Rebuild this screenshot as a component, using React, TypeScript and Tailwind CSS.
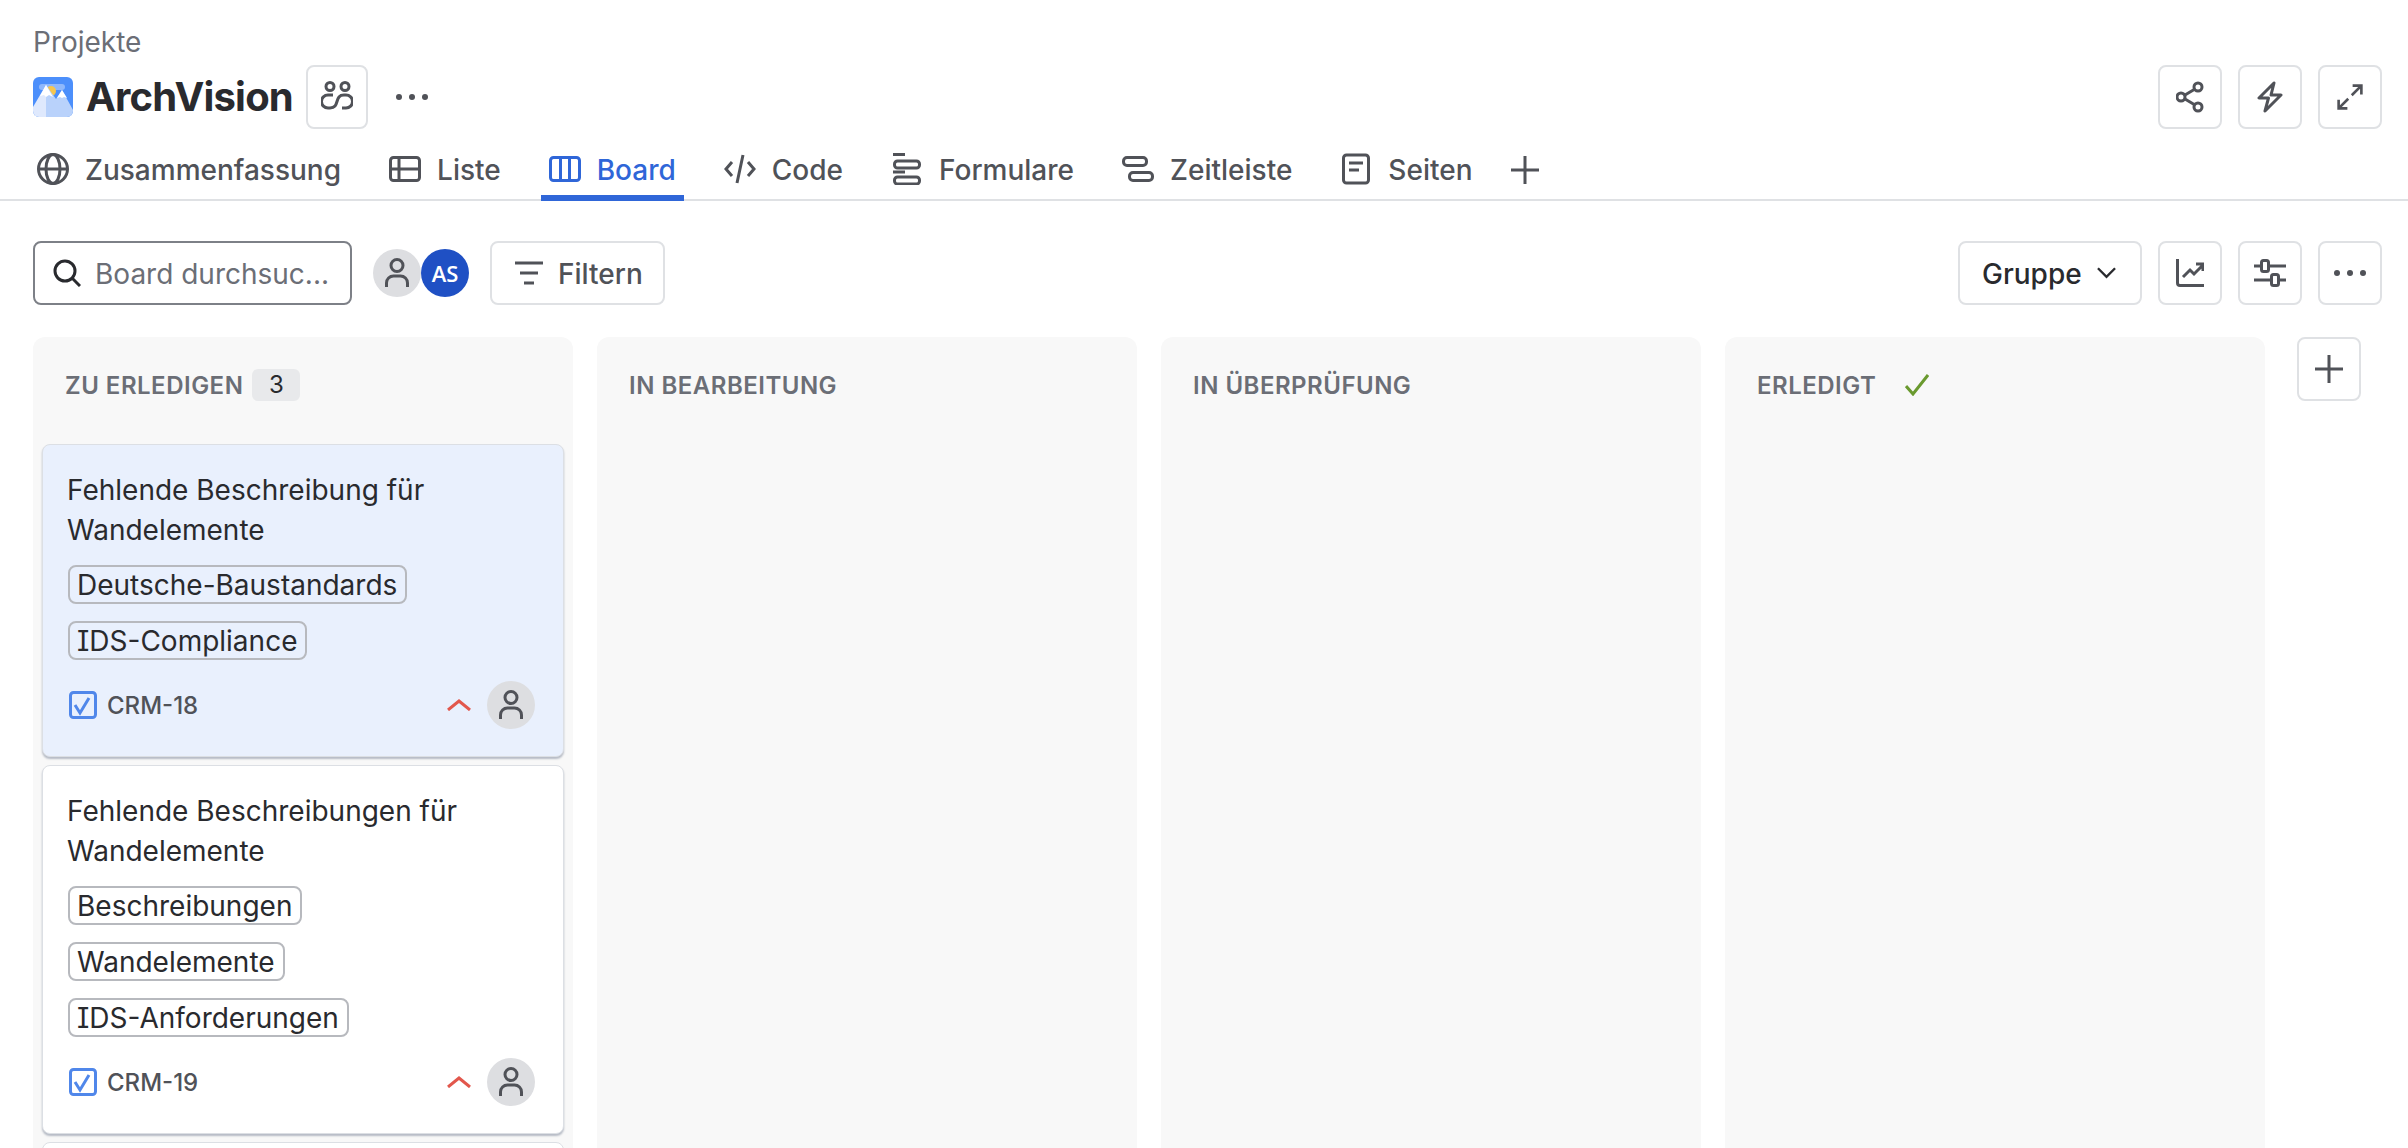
import type { ReactNode } from 'react';

type IconProps = { className?: string };

const iconBase = 'fill-none stroke-current stroke-[3]';

function GlobeIcon() {
    return (
        <svg viewBox="0 0 32 32" className={`w-8 h-8 ${iconBase}`}>
            <circle cx="16" cy="16" r="14.5" />
            <ellipse cx="16" cy="16" rx="7" ry="14.5" />
            <path d="M1 16h30" />
        </svg>
    );
}

function ListIcon() {
    return (
        <svg viewBox="0 0 32 32" className={`w-8 h-8 ${iconBase}`}>
            <rect x="1.5" y="4.5" width="29" height="23" rx="3" />
            <path d="M1.5 16h29M10 4.5v23" />
        </svg>
    );
}

function BoardIcon() {
    return (
        <svg viewBox="0 0 32 32" className={`w-8 h-8 ${iconBase}`}>
            <rect x="1.5" y="4.5" width="29" height="23" rx="3" />
            <path d="M11.5 4.5v23M20.5 4.5v23" />
        </svg>
    );
}

function CodeIcon() {
    return (
        <svg viewBox="0 0 32 32" className={`w-8 h-8 ${iconBase}`}>
            <path d="M8 9l-6 7 6 7M24 9l6 7-6 7M19 2l-6 28" />
        </svg>
    );
}

function FormIcon() {
    return (
        <svg viewBox="0 0 30 32" className={`w-[30px] h-8 ${iconBase}`}>
            <path d="M0 1.5h12M0 19h12" />
            <rect x="1.5" y="8" width="25" height="7" rx="3" />
            <rect x="1.5" y="24" width="25" height="7" rx="3" />
        </svg>
    );
}

function TimelineIcon() {
    return (
        <svg viewBox="0 0 32 32" className={`w-8 h-8 ${iconBase}`}>
            <rect x="1.5" y="4.5" width="23" height="8" rx="3.5" />
            <rect x="7.5" y="19.5" width="23" height="8" rx="3.5" />
        </svg>
    );
}

function PageIcon() {
    return (
        <svg viewBox="0 0 30 32" className={`w-[30px] h-8 ${iconBase}`}>
            <rect x="1.5" y="2" width="25" height="28" rx="3" />
            <path d="M7 10h14M7 17h10" />
        </svg>
    );
}

function PlusIcon({ className }: IconProps) {
    return (
        <svg viewBox="0 0 28 28" className={`${className} fill-none stroke-current stroke-[3]`}>
            <path d="M14 0v28M0 14h28" />
        </svg>
    );
}

function UserIcon() {
    return (
        <svg viewBox="0 0 24 30" className="w-6 h-[30px] fill-none stroke-[#505258] stroke-[3]">
            <circle cx="12" cy="7.5" r="6" />
            <path d="M1.5 29v-4a7 7 0 0 1 7-7h7a7 7 0 0 1 7 7v4" />
        </svg>
    );
}

function Avatar() {
    return (
        <div className="w-12 h-12 rounded-full bg-[#dddee1] flex items-center justify-center">
            <UserIcon />
        </div>
    );
}

function IconButton({ children }: { children: ReactNode }) {
    return (
        <button className="w-16 h-16 rounded-lg border-2 border-[#dfe1e4] bg-white flex items-center justify-center text-[#505258]">
            {children}
        </button>
    );
}

function Dots() {
    return (
        <svg viewBox="0 0 32 8" className="w-8 h-2 fill-current">
            <circle cx="3" cy="4" r="3" />
            <circle cx="16" cy="4" r="3" />
            <circle cx="29" cy="4" r="3" />
        </svg>
    );
}

function Logo() {
    return (
        <svg viewBox="0 0 40 40" className="w-10 h-10 rounded-md">
            <rect width="40" height="40" fill="#4c8ffb" />
            <rect x="6" y="7" width="26" height="6" rx="3" fill="#8fb8fb" />
            <circle cx="18" cy="14" r="5" fill="#f5c64f" />
            <path d="M0 30L13 8l13 22v10H0z" fill="#dfe9fd" />
            <path d="M13 8v32h27v-7l-11-20-6 9z" fill="#b9d2fb" />
            <path d="M13 8l-6 11 4-1 2 2 3-2 4 2z" fill="#ffffff" />
            <path d="M29 13l-5 8 3-1 2 1 2-1 3 1z" fill="#ffffff" />
        </svg>
    );
}

function TaskCheck() {
    return (
        <svg viewBox="0 0 28 28" className="ml-px w-7 h-7 fill-none">
            <rect x="1.5" y="1.5" width="25" height="25" rx="3" stroke="#5087ea" strokeWidth="3" />
            <path d="M6 14l5 8 9-15" stroke="#5087ea" strokeWidth="3" />
        </svg>
    );
}

function PriorityUp() {
    return (
        <svg viewBox="0 0 24 12" className="w-6 h-3 fill-none stroke-[#e2574c] stroke-[3]">
            <path d="M1 11l11-9 11 9" />
        </svg>
    );
}

function Card({ title, tags, code, active }: { title: string; tags: string[]; code: string; active?: boolean }) {
    return (
        <div
            className={`rounded-lg border border-[#dcdfe4] shadow-[0_2px_2px_rgba(9,30,66,0.28)] pl-[25px] pr-[28px] pt-[25px] pb-[27px] ${
                active ? 'bg-[#e9f0fd]' : 'bg-white'
            }`}
        >
            <p className="-ml-px text-[28px] leading-10 text-[#292a2e]">{title}</p>
            <div className="mt-[15px] flex flex-col items-start gap-[17px]">
                {tags.map((tag) => (
                    <span
                        key={tag}
                        className="h-[39px] pl-[7px] pr-[8px] rounded-lg border-2 border-[#b7b9be] text-[28px] leading-[37px] text-[#292a2e] [font-feature-settings:'cv08']"
                    >
                        {tag}
                    </span>
                ))}
            </div>
            <div className="mt-[21px] flex items-center h-12">
                <TaskCheck />
                <span className="ml-[10px] pt-[2px] text-2xl font-medium text-[#505258]">{code}</span>
                <div className="ml-auto mr-4">
                    <PriorityUp />
                </div>
                <Avatar />
            </div>
        </div>
    );
}

function Column({ title, children, extra }: { title: string; children?: ReactNode; extra?: ReactNode }) {
    return (
        <div className="w-[540px] h-[811px] rounded-t-xl bg-[#f8f8f8] px-[9px]">
            <div className="h-24 pl-[23px] flex items-center gap-[9px]">
                <span className="pt-[2px] text-2xl font-semibold tracking-[0.5px] text-[#6b6e76]">{title}</span>
                {extra}
            </div>
            <div className="mt-[11px] flex flex-col gap-2">{children}</div>
        </div>
    );
}

const tabs = [
    { label: 'Zusammenfassung', icon: <GlobeIcon />, extra: '' },
    { label: 'Liste', icon: <ListIcon />, extra: '' },
    { label: 'Board', icon: <BoardIcon />, extra: '', active: true },
    { label: 'Code', icon: <CodeIcon />, extra: '' },
    { label: 'Formulare', icon: <FormIcon />, extra: 'ml-[2px]' },
    { label: 'Zeitleiste', icon: <TimelineIcon />, extra: '' },
    { label: 'Seiten', icon: <PageIcon />, extra: 'ml-[2px]' },
];

export default function App() {
    return (
        <div className="h-[1148px] overflow-hidden bg-white font-[Inter,sans-serif]">
            {/* Header */}
            <div className="border-b-2 border-[#dfe1e4]">
                <div className="pl-[33px] pr-[26px] pt-6">
                    <p className="text-[28px] leading-9 text-[#6b6e76]">Projekte</p>
                    <div className="mt-[5px] h-16 flex items-center">
                        <Logo />
                        <h1 className="ml-[13px] text-[40px] leading-none font-bold tracking-[-0.8px] text-[#292a2e]">ArchVision</h1>
                        <div className="ml-[13px]">
                            <button className="w-[62px] h-16 rounded-lg border-2 border-[#dfe1e4] flex items-center justify-center text-[#505258]">
                                <svg viewBox="0 0 32 32" className="w-8 h-8 fill-none stroke-current stroke-[3]">
                                    <circle cx="9" cy="5.5" r="4" />
                                    <circle cx="24" cy="5.5" r="4" />
                                    <path d="M12 14H7a6.5 6.5 0 0 0 0 13h2c5 0 6-3 7-6.5s2-6.5 7-6.5h2a6.5 6.5 0 0 1 0 13h-4" />
                                </svg>
                            </button>
                        </div>
                        <div className="ml-[28px] text-[#505258]">
                            <Dots />
                        </div>
                        <div className="ml-auto flex gap-4">
                            <IconButton>
                                <svg viewBox="0 0 28 32" className="w-7 h-8 fill-none stroke-current stroke-[3]">
                                    <circle cx="5" cy="16" r="4" />
                                    <circle cx="22" cy="6" r="4" />
                                    <circle cx="22" cy="26" r="4" />
                                    <path d="M9 14l10-6M9 18l10 6" />
                                </svg>
                            </IconButton>
                            <IconButton>
                                <svg viewBox="0 0 26 32" className="w-[26px] h-8 fill-none stroke-current stroke-[3]" strokeLinejoin="round">
                                    <path d="M17 2L2 17h9.5L8 30l16-16h-10z" />
                                </svg>
                            </IconButton>
                            <IconButton>
                                <svg viewBox="0 0 32 32" className="w-7 h-7 fill-none stroke-current stroke-[3]">
                                    <path d="M19 3h10v10M29 3L18 14M13 29H3V19M3 29l11-11" />
                                </svg>
                            </IconButton>
                        </div>
                    </div>
                </div>

                {/* Tabs */}
                <div className="mt-[9px] -mb-[2px] pl-[29px] flex items-center gap-8 text-[28px] font-medium text-[#505258]">
                    {tabs.map((tab) => (
                        <div
                            key={tab.label}
                            className={`h-[63px] px-2 flex items-center gap-4 border-b-[6px] pt-[5px] ${tab.extra} ${
                                tab.active ? 'border-[#2f66d8] text-[#2f66d8]' : 'border-transparent'
                            }`}
                        >
                            {tab.icon}
                            <span className="pt-px">{tab.label}</span>
                        </div>
                    ))}
                    <div className="-ml-px">
                        <PlusIcon className="w-7 h-7" />
                    </div>
                </div>
            </div>

            {/* Toolbar */}
            <div className="mt-10 pl-[33px] pr-[26px] flex items-center">
                <div className="w-[319px] h-16 rounded-lg border-2 border-[#7d8087] flex items-center pl-[18px] gap-[14px]">
                    <svg viewBox="0 0 28 28" className="w-7 h-7 shrink-0 fill-none stroke-[#292a2e] stroke-[3]">
                        <circle cx="12" cy="12" r="10" />
                        <path d="M19 19l8 8" />
                    </svg>
                    <span className="pt-[2px] text-[28px] text-[#6b6e76]">Board durchsuc...</span>
                </div>
                <div className="ml-[21px] flex items-center">
                    <Avatar />
                    <div className="w-12 h-12 rounded-full bg-[#1f50c4] text-white text-[22px] font-semibold font-[Open_Sans,sans-serif] flex items-center justify-center">
                        AS
                    </div>
                </div>
                <button className="ml-[21px] w-[175px] h-16 rounded-lg border-2 border-[#dfe1e4] flex items-center pl-[23px] gap-[15px] text-[28px] font-medium text-[#505258]">
                    <svg viewBox="0 0 28 28" className="w-7 h-7 fill-none stroke-current stroke-[3]">
                        <path d="M0 4h28M5 14h18M9 24h10" />
                    </svg>
                    <span className="pt-[2px]">Filtern</span>
                </button>
                <button className="ml-auto w-[184px] h-16 rounded-lg border-2 border-[#dfe1e4] flex items-center pl-[22px] gap-[15px] text-[28px] font-medium text-[#292a2e]">
                    <span className="pt-[2px]">Gruppe</span>
                    <svg viewBox="0 0 20 12" className="w-[19px] h-3 fill-none stroke-current stroke-[2.5]">
                        <path d="M1 1l9 9 9-9" />
                    </svg>
                </button>
                <div className="ml-4 flex gap-4">
                    <IconButton>
                        <svg viewBox="0 0 28 28" className="w-7 h-7 fill-none stroke-current stroke-[3]">
                            <path d="M1.5 0v24a2.5 2.5 0 0 0 2.5 2.5h24M7 18l7-7 4 4 9-9M20 5h7v7" />
                        </svg>
                    </IconButton>
                    <IconButton>
                        <svg viewBox="0 0 32 28" className="w-8 h-7 fill-none stroke-current stroke-[3]">
                            <path d="M0 7h6M16 7h16M0 21h16M26 21h6" />
                            <rect x="7.5" y="1.5" width="7" height="11" rx="2" />
                            <rect x="17.5" y="15.5" width="7" height="11" rx="2" />
                        </svg>
                    </IconButton>
                    <IconButton>
                        <Dots />
                    </IconButton>
                </div>
            </div>

            {/* Board */}
            <div className="mt-8 pl-[33px] flex items-start gap-6">
                <Column
                    title="ZU ERLEDIGEN"
                    extra={
                        <span className="w-12 h-8 rounded-md bg-[#e8e9eb] text-2xl text-[#292a2e] flex items-center justify-center">3</span>
                    }
                >
                    <Card
                        active
                        title="Fehlende Beschreibung für Wandelemente"
                        tags={['Deutsche-Baustandards', 'IDS-Compliance']}
                        code="CRM-18"
                    />
                    <Card
                        title="Fehlende Beschreibungen für Wandelemente"
                        tags={['Beschreibungen', 'Wandelemente', 'IDS-Anforderungen']}
                        code="CRM-19"
                    />
                    <div className="h-40 rounded-lg border border-[#dcdfe4] bg-white" />
                </Column>
                <Column title="IN BEARBEITUNG" />
                <Column title="IN ÜBERPRÜFUNG" />
                <Column
                    title="ERLEDIGT"
                    extra={
                        <svg viewBox="0 0 24 22" className="ml-5 w-6 h-[22px] fill-none stroke-[#6a9a2f] stroke-[3]">
                            <path d="M1 12l7 8L23 1" />
                        </svg>
                    }
                />
                <div className="ml-2 text-[#505258]">
                    <IconButton>
                        <PlusIcon className="w-7 h-7" />
                    </IconButton>
                </div>
            </div>
        </div>
    );
}
